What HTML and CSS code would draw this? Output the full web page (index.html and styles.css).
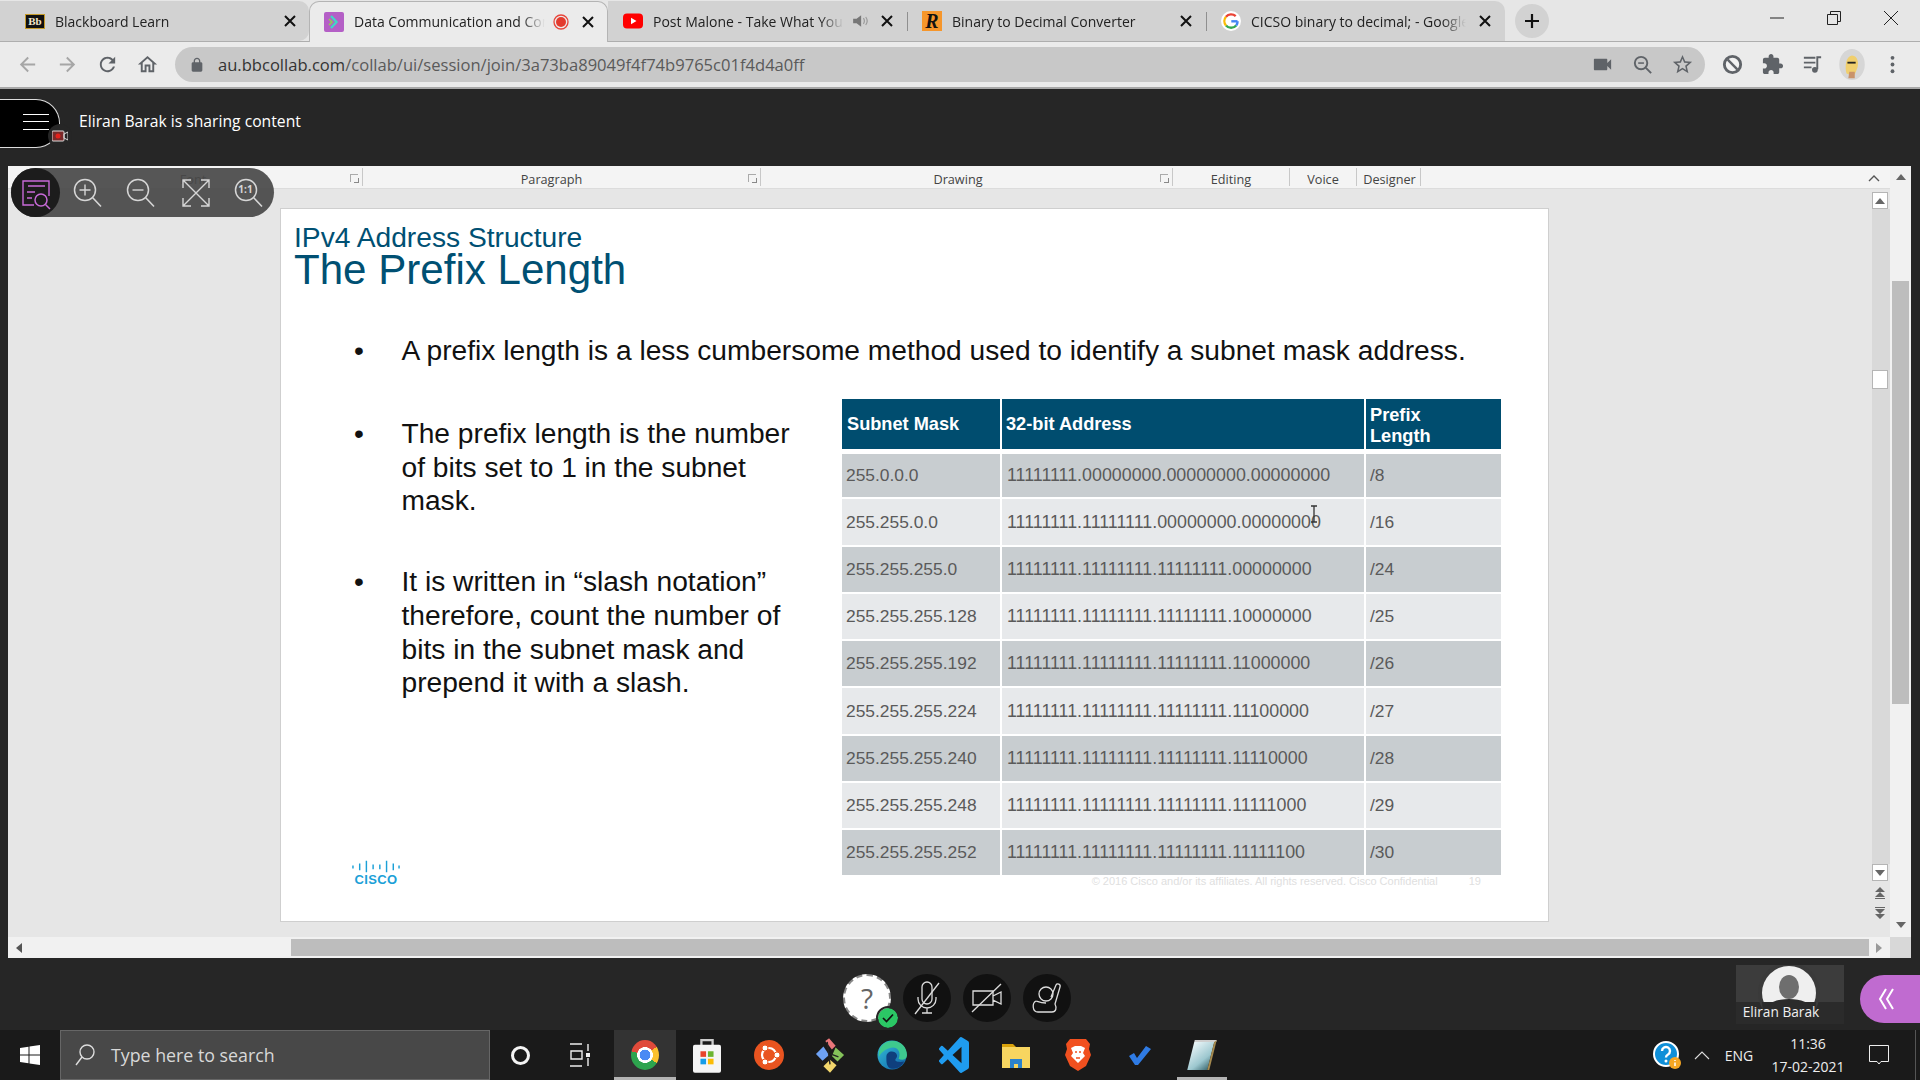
FILE: index.html
```html
<!DOCTYPE html>
<html lang="en">
<head>
<meta charset="utf-8">
<title>Data Communication and Computer Networks</title>
<link rel="stylesheet" href="styles.css">
</head>
<body>
<svg class="sprite" aria-hidden="true">
  <symbol id="close" viewBox="0 0 14 14"><path d="M2 2l10 10M12 2L2 12" fill="none" stroke="#111" stroke-width="2"/></symbol>
  <symbol id="tmag" viewBox="0 0 40 40"><circle cx="18" cy="17" r="10.5" fill="none" stroke="#d6d6d6" stroke-width="1.5"/><path d="M25.5 24.5L34 33.5" stroke="#d6d6d6" stroke-width="1.6"/></symbol>
  <symbol id="uptri" viewBox="0 0 10 6"><path d="M5 0l5 6H0z" fill="#666"/></symbol>
  <symbol id="dntri" viewBox="0 0 10 6"><path d="M0 0h10L5 6z" fill="#666"/></symbol>
</svg>

<header class="tabstrip">
  <div class="tab tab-first">
    <span class="fav fav-bb">Bb</span>
    <span class="tab-title">Blackboard Learn</span>
    <svg class="tab-close"><use href="#close"/></svg>
  </div>
  <div class="tab tab-active">
    <svg class="fav" viewBox="0 0 20 20"><rect width="20" height="20" rx="2" fill="#b45fc6"/><path d="M7 4l5.5 6L7 16" fill="none" stroke="#43d6c4" stroke-width="2.4"/><path d="M5 7l3 3-3 3" fill="none" stroke="#8fd14f" stroke-width="1.6"/></svg>
    <span class="tab-title">Data Communication and Computer</span>
    <svg class="tab-rec" viewBox="0 0 16 16"><circle cx="8" cy="8" r="7" fill="none" stroke="#e8453a" stroke-width="1.3"/><circle cx="8" cy="8" r="5" fill="#e33b2e"/></svg>
    <svg class="tab-close"><use href="#close"/></svg>
  </div>
  <div class="tab">
    <svg class="fav" viewBox="0 0 20 20"><rect y="2.5" width="20" height="15" rx="4" fill="#f00"/><path d="M8 6.8l5.5 3.2L8 13.200z" fill="#fff"/></svg>
    <span class="tab-title">Post Malone - Take What You Want</span>
    <svg class="tab-rec" viewBox="0 0 14 14"><path d="M1 5h3l4-3v10L4 9H1z" fill="#777"/><path d="M10 4.500c1 1.500 1 3.500 0 5M12 3.500c1.500 2 1.500 5 0 7" fill="none" stroke="#999"/></svg>
    <svg class="tab-close"><use href="#close"/></svg>
  </div>
  <div class="tab tab-sep">
    <span class="fav fav-r">R</span>
    <span class="tab-title">Binary to Decimal Converter</span>
    <svg class="tab-close"><use href="#close"/></svg>
  </div>
  <div class="tab tab-sep tab-google">
    <svg class="fav" viewBox="0 0 20 20"><circle cx="10" cy="10" r="10" fill="#fff"/><path d="M16.500 10.300H10.300" fill="none" stroke="#4285f4" stroke-width="2.400"/><path d="M15.200 14.500A6.800 6.800 0 0 1 5 14.500" fill="none" stroke="#34a853" stroke-width="2.400"/><path d="M5 14.500A6.800 6.800 0 0 1 5 5.700" fill="none" stroke="#fbbc05" stroke-width="2.400"/><path d="M5 5.700A6.800 6.800 0 0 1 14.700 5.200" fill="none" stroke="#ea4335" stroke-width="2.400"/><path d="M16.600 10.300A6.800 6.800 0 0 1 15.200 14.500" fill="none" stroke="#4285f4" stroke-width="2.400"/></svg>
    <span class="tab-title">CICSO binary to decimal; - Google Search</span>
    <svg class="tab-close"><use href="#close"/></svg>
  </div>
  <div class="newtab"><svg viewBox="0 0 16 16" width="16" height="16"><path d="M8 1v14M1 8h14" stroke="#111" stroke-width="2.200"/></svg></div>
  <div class="winctl">
    <svg viewBox="0 0 14 14" width="14" height="14"><path d="M0 7h14" stroke="#222" stroke-width="1"/></svg>
    <svg viewBox="0 0 14 14" width="14" height="14"><path d="M.5 3.500h10v10H.5zM3.500 3.500V.5h10v10h-3" fill="none" stroke="#222"/></svg>
    <svg viewBox="0 0 14 14" width="14" height="14"><path d="M0 0l14 14M14 0L0 14" stroke="#222"/></svg>
  </div>
</header>

<nav class="toolbar">
  <span class="tbtn"><svg viewBox="0 0 24 24"><path fill="#a6a6a6" d="M20 11H7.830l5.590-5.590L12 4l-8 8 8 8 1.410-1.410L7.830 13H20v-2z"/></svg></span>
  <span class="tbtn"><svg viewBox="0 0 24 24"><path fill="#a6a6a6" d="M12 4l-1.410 1.410L16.170 11H4v2h12.170l-5.580 5.590L12 20l8-8z"/></svg></span>
  <span class="tbtn"><svg viewBox="0 0 24 24"><path fill="#5f6368" d="M17.650 6.350C16.200 4.900 14.210 4 12 4c-4.420 0-7.990 3.580-7.990 8s3.570 8 7.990 8c3.730 0 6.840-2.550 7.730-6h-2.080c-.82 2.330-3.040 4-5.650 4-3.310 0-6-2.690-6-6s2.690-6 6-6c1.660 0 3.140.69 4.220 1.780L13 11h7V4l-2.350 2.350z"/></svg></span>
  <span class="tbtn"><svg viewBox="0 0 24 24"><path fill="#5f6368" d="M12 5.690l5 4.500V18h-2v-6H9v6H7v-7.810l5-4.500M12 3L2 12h3v8h6v-6h2v6h6v-8h3L12 3z"/></svg></span>
  <div class="omnibox">
    <svg class="lock" viewBox="0 0 24 24"><path fill="#5f6368" d="M18 8h-1V6c0-2.760-2.240-5-5-5S7 3.240 7 6v2H6c-1.100 0-2 .9-2 2v10c0 1.100.9 2 2 2h12c1.100 0 2-.9 2-2V10c0-1.100-.9-2-2-2zM9 6c0-1.660 1.340-3 3-3s3 1.340 3 3v2H9V6z"/></svg>
    <span class="url"><b>au.bbcollab.com</b>/collab/ui/session/join/3a73ba89049f4f74b9765c01f4d4a0ff</span>
    <span class="tbtn"><svg viewBox="0 0 24 24"><path fill="#5f6368" d="M17 10.500V7c0-.55-.45-1-1-1H4c-.55 0-1 .45-1 1v10c0 .55.45 1 1 1h12c.55 0 1-.45 1-1v-3.500l4 4v-11l-4 4z"/></svg></span>
    <span class="tbtn"><svg viewBox="0 0 24 24"><circle cx="10.500" cy="10.500" r="6.500" fill="none" stroke="#5f6368" stroke-width="2"/><path d="M15.500 15.500L21 21" stroke="#5f6368" stroke-width="2"/><path d="M7.500 10.500h6" stroke="#5f6368" stroke-width="1.600"/></svg></span>
    <span class="tbtn"><svg viewBox="0 0 24 24"><path fill="#5f6368" d="M22 9.240l-7.190-.62L12 2 9.190 8.630 2 9.240l5.460 4.730L5.820 21 12 17.270 18.180 21l-1.630-7.030L22 9.240zM12 15.400l-3.760 2.270 1-4.280-3.320-2.880 4.380-.38L12 6.100l1.710 4.040 4.380.38-3.320 2.880 1 4.280L12 15.400z"/></svg></span>
  </div>
  <div class="ext">
    <span class="tbtn"><svg viewBox="0 0 24 24"><circle cx="12" cy="12" r="8.500" fill="#f2f2f2" stroke="#5f6368" stroke-width="3"/><path d="M7 7l10 10" stroke="#5f6368" stroke-width="2.500"/></svg></span>
    <span class="tbtn"><svg viewBox="0 0 24 24"><path fill="#5f6368" d="M20.500 11H19V7c0-1.100-.9-2-2-2h-4V3.500C13 2.120 11.880 1 10.500 1S8 2.120 8 3.500V5H4c-1.100 0-1.990.9-1.990 2v3.800H3.500c1.490 0 2.700 1.210 2.700 2.700s-1.210 2.700-2.700 2.700H2V20c0 1.100.9 2 2 2h3.800v-1.500c0-1.490 1.210-2.700 2.700-2.700 1.490 0 2.700 1.210 2.700 2.700V22H17c1.100 0 2-.9 2-2v-4h1.500c1.380 0 2.500-1.120 2.500-2.500S21.880 11 20.500 11z"/></svg></span>
    <span class="tbtn"><svg viewBox="0 0 24 24"><path d="M3 5h12M3 10h12M3 15h8" stroke="#5f6368" stroke-width="2"/><path d="M17 17V4.500h4" fill="none" stroke="#5f6368" stroke-width="2"/><circle cx="14.500" cy="17.500" r="3" fill="#5f6368"/></svg></span>
    <span class="tbtn"><svg viewBox="0 0 28 34" class="avatar"><ellipse cx="14" cy="17" rx="14" ry="17" fill="#d6d6d6"/><path d="M8 27c-2-8-1-19 6-20 7 0 8 10 5 16l-2 5h-6z" fill="#f0cf6e"/><path d="M9 15h9" stroke="#222" stroke-width="2"/><path d="M11 25h6v7h-7z" fill="#c9936b"/></svg></span>
    <span class="tbtn"><svg viewBox="0 0 24 24"><circle cx="12" cy="5" r="2" fill="#5f6368"/><circle cx="12" cy="12" r="2" fill="#5f6368"/><circle cx="12" cy="19" r="2" fill="#5f6368"/></svg></span>
  </div>
</nav>

<section class="sessionbar">
  <div class="menu-pill">
    <span class="burger"></span>
    <span class="cam-badge"><svg viewBox="0 0 16 12" width="16" height="12"><rect x="0" y="1" width="12" height="10" rx="1" fill="#7a2a2a" stroke="#ddd"/><circle cx="6" cy="6" r="2.500" fill="#e3211c"/><path d="M12 4l4-2v8l-4-2z" fill="none" stroke="#ddd"/></svg></span>
  </div>
  <span class="session-text">Eliran Barak is sharing content</span>
</section>

<main class="viewer">
  <div class="viewer-body">
    <div class="doc">
      <div class="ribbon">
        <span class="rb rb-clip"></span>
        <span class="rb rb-font">Font<i class="launch"></i></span>
        <span class="rb rb-para">Paragraph<i class="launch"></i></span>
        <span class="rb rb-draw">Drawing<i class="launch"></i></span>
        <span class="rb rb-edit">Editing</span>
        <span class="rb rb-voice">Voice</span>
        <span class="rb rb-design">Designer</span>
        <svg class="rb-collapse" viewBox="0 0 12 7" width="12" height="7"><path d="M1 6l5-5 5 5" fill="none" stroke="#555" stroke-width="1.400"/></svg>
      </div>
      <div class="stage">
        <div class="canvas">
          <article class="slide">
            <p class="kicker">IPv4 Address Structure</p>
            <h1 class="headline">The Prefix Length</h1>
            <div class="point point-wide"><span class="dot">•</span><span>A prefix length is a less cumbersome method used to identify a subnet mask address.</span></div>
            <div class="columns">
              <div class="col-text">
                <div class="point"><span class="dot">•</span><span>The prefix length is the number<br>of bits set to 1 in the subnet<br>mask.</span></div>
                <div class="point point-next"><span class="dot">•</span><span>It is written in “slash notation”<br>therefore, count the number of<br>bits in the subnet mask and<br>prepend it with a slash.</span></div>
                <div class="cisco">
                  <svg viewBox="0 0 50 14" width="48" height="15"><path d="M1 7v3M8 5v7M15 2v12M22 6v5M29 6v5M36 2v12M43 5v7M49 7v3" stroke="#1ba0d7" stroke-width="1.500"/></svg>
                  <span>CISCO</span>
                </div>
              </div>
              <div class="col-table">
                <table class="prefix">
                  <thead><tr><th>Subnet Mask</th><th>32-bit Address</th><th>Prefix<br>Length</th></tr></thead>
                  <tbody>
                    <tr><td>255.0.0.0</td><td>11111111.00000000.00000000.00000000</td><td>/8</td></tr>
                    <tr><td>255.255.0.0</td><td>11111111.11111111.00000000.00000000</td><td>/16</td></tr>
                    <tr><td>255.255.255.0</td><td>11111111.11111111.11111111.00000000</td><td>/24</td></tr>
                    <tr><td>255.255.255.128</td><td>11111111.11111111.11111111.10000000</td><td>/25</td></tr>
                    <tr><td>255.255.255.192</td><td>11111111.11111111.11111111.11000000</td><td>/26</td></tr>
                    <tr><td>255.255.255.224</td><td>11111111.11111111.11111111.11100000</td><td>/27</td></tr>
                    <tr><td>255.255.255.240</td><td>11111111.11111111.11111111.11110000</td><td>/28</td></tr>
                    <tr><td>255.255.255.248</td><td>11111111.11111111.11111111.11111000</td><td>/29</td></tr>
                    <tr><td>255.255.255.252</td><td>11111111.11111111.11111111.11111100</td><td>/30</td></tr>
                  </tbody>
                </table>
                <p class="legal">© 2016 Cisco and/or its affiliates. All rights reserved. Cisco Confidential <span class="pageno">19</span></p>
                <svg class="ibeam" viewBox="0 0 8 18" width="8" height="18"><path d="M1 1h6M4 1v16M1 17h6" stroke="#333" stroke-width="1.300" fill="none"/></svg>
              </div>
            </div>
          </article>
        </div>
        <div class="inner-scroll">
          <span class="isb"><svg width="10" height="6"><use href="#uptri"/></svg></span>
          <div class="itrack"><span class="ithumb"></span></div>
          <span class="isb"><svg width="10" height="6"><use href="#dntri"/></svg></span>
          <svg class="dbl" viewBox="0 0 10 12" width="10" height="12"><path d="M5 0l5 5H0zM5 5l5 5H0zM0 11h10v1H0z" fill="#666"/></svg>
          <svg class="dbl dbl2" viewBox="0 0 10 12" width="10" height="12"><path d="M0 0h10v1H0zM0 2h10L5 7zM0 7h10l-5 5z" fill="#666"/></svg>
        </div>
      </div>
    </div>
    <div class="outer-v">
      <svg class="ov-up" width="10" height="6"><use href="#uptri"/></svg>
      <span class="ov-thumb"></span>
      <svg class="ov-dn" width="10" height="6"><use href="#dntri"/></svg>
    </div>
  </div>
  <div class="outer-h">
    <svg class="oh-l" viewBox="0 0 6 10" width="6" height="10"><path d="M6 0v10L0 5z" fill="#555"/></svg>
    <span class="oh-thumb"></span>
    <svg class="oh-r" viewBox="0 0 6 10" width="6" height="10"><path d="M0 0v10l6-5z" fill="#999"/></svg>
    <span class="oh-corner"></span>
  </div>

  <div class="zoomtools">
    <span class="zt zt-on"><svg viewBox="0 0 40 40" width="40" height="40"><path d="M18 32H7V8h26v15" fill="none" stroke="#c76ad8" stroke-width="1.400"/><path d="M12 13h17M11 19h8M11 25h5" stroke="#c76ad8" stroke-width="1.400"/><circle cx="25" cy="27" r="6" fill="none" stroke="#c76ad8" stroke-width="1.500"/><path d="M29.500 31.500L34 36" stroke="#c76ad8" stroke-width="1.500"/></svg></span>
    <span class="zt"><svg width="40" height="40"><use href="#tmag"/><path d="M12.500 17h11M18 11.500v11" stroke="#d6d6d6" stroke-width="1.400"/></svg></span>
    <span class="zt"><svg width="40" height="40"><use href="#tmag"/><path d="M12.500 17h11" stroke="#d6d6d6" stroke-width="1.400"/></svg></span>
    <span class="zt zt-fit"><svg viewBox="0 0 40 40" width="40" height="40"><path d="M7 15V7h8M33 15V7h-8M7 25v8h8M33 25v8h-8M7 7l26 26M33 7L7 33" fill="none" stroke="#d6d6d6" stroke-width="1.400"/></svg></span>
    <span class="zt zt-one"><svg width="40" height="40"><use href="#tmag"/></svg><b>1:1</b></span>
  </div>
</main>

<section class="controls">
  <div class="ctl ctl-me">?<span class="ok"><svg viewBox="0 0 12 10" width="12" height="10"><path d="M1 5l3.500 3.500L11 1.500" fill="none" stroke="#111" stroke-width="1.700"/></svg></span></div>
  <div class="ctl"><svg viewBox="0 0 32 36" width="32" height="36"><path d="M11 7a5 5 0 0 1 10 0v12a5 5 0 0 1-10 0zM7 17v2a9 9 0 0 0 18 0v-2M16 28v5M11 33h10" fill="none" stroke="#ddd" stroke-width="1.300"/><path d="M4 34L28 3" stroke="#ddd" stroke-width="1.300"/></svg></div>
  <div class="ctl"><svg viewBox="0 0 32 36" width="34" height="36"><path d="M2 11h20v14H2zM22 16l8-4v12l-8-4z" fill="none" stroke="#ddd" stroke-width="1.300"/><path d="M1 32L30 4" stroke="#ddd" stroke-width="1.300"/></svg></div>
  <div class="ctl"><svg viewBox="0 0 36 36" width="36" height="36"><circle cx="17" cy="14" r="7" fill="none" stroke="#ddd" stroke-width="1.300"/><path d="M7 21c-4 2-4 11 2 11h14c4 0 5-4 3-8l5-17c1-3-3-4-4-2l-5 12M7 21c3 1 5 2 10 2" fill="none" stroke="#ddd" stroke-width="1.300"/></svg></div>
  <div class="tile">
    <span class="tile-top"></span>
    <svg class="tile-av" viewBox="0 0 62 62" width="62" height="62"><circle cx="31" cy="31" r="31" fill="#3a3a3a"/><circle cx="31" cy="31" r="27" fill="#efefef"/><ellipse cx="31" cy="25" rx="10" ry="12" fill="#6e6e6e"/><path d="M4 40h54a27 27 0 0 1-54 0z" fill="#2b2b2b"/><ellipse cx="31" cy="46" rx="22" ry="9" fill="#2b2b2b"/></svg>
    <span class="tile-name">Eliran Barak</span>
  </div>
  <div class="drawer"><svg viewBox="0 0 16 24" width="16" height="24"><path d="M8 2L2 12l6 10M15 2L9 12l6 10" fill="none" stroke="#fff" stroke-width="2"/></svg></div>
</section>

<footer class="taskbar">
  <span class="start"><svg viewBox="0 0 20 20" width="20" height="20"><path fill="#fff" d="M0 3l8.500-1.200v7.700H0zM9.500 1.600L20 0v9.500H9.500zM0 10.500h8.500v7.700L0 17zM9.500 10.500H20V20L9.500 18.400z"/></svg></span>
  <div class="search">
    <svg viewBox="0 0 20 22" width="20" height="22"><circle cx="12" cy="8" r="7" fill="none" stroke="#ddd" stroke-width="1.400"/><path d="M7 13L1 21" stroke="#ddd" stroke-width="1.400"/></svg>
    <span>Type here to search</span>
  </div>
  <span class="tk"><span class="cortana"></span></span>
  <span class="tk tk-view"><svg viewBox="0 0 20 24" width="20" height="24"><path d="M0 1h12M0 23h12M1 8h11v8H1zM18 1v7M18 15v8" fill="none" stroke="#eee" stroke-width="1.400"/><rect x="16" y="10" width="4" height="4" fill="#eee"/></svg></span>
  <span class="tk tk-active"><span class="chrome"></span></span>
  <span class="tk"><svg viewBox="0 0 30 38" width="28" height="36"><path d="M9 9V3h12v6" fill="none" stroke="#ccc" stroke-width="2.500"/><rect y="8" width="30" height="30" rx="2" fill="#f5f5f5"/><rect x="8" y="15" width="6" height="6" fill="#e8452c"/><rect x="16" y="15" width="6" height="6" fill="#6cb530"/><rect x="8" y="23" width="6" height="6" fill="#159de8"/><rect x="16" y="23" width="6" height="6" fill="#fbbc05"/></svg></span>
  <span class="tk"><svg viewBox="0 0 30 30" width="30" height="32"><circle cx="15" cy="15" r="15" fill="#e95420"/><circle cx="15" cy="15" r="7" fill="none" stroke="#fff" stroke-width="2.200"/><circle cx="23" cy="15" r="3" fill="#fff" stroke="#e95420"/><circle cx="11" cy="8" r="3" fill="#fff" stroke="#e95420"/><circle cx="11" cy="22" r="3" fill="#fff" stroke="#e95420"/></svg></span>
  <span class="tk"><svg viewBox="0 0 32 38" width="30" height="36"><path d="M11 4l4-3 7 8-4 4z" fill="#e9777a"/><path d="M9 10l6 9-7 6-7-7z" fill="#6ea2f5"/><path d="M22 11l9 8-7 7-6-6z" fill="#84c25a"/><path d="M16 24l7 6-7 8-7-7z" fill="#f2d66c"/><path d="M13 5l3 24M17 18l8 3" stroke="#222" stroke-width="1.500"/></svg></span>
  <span class="tk"><svg viewBox="0 0 32 36" width="30" height="34"><defs><linearGradient id="eg" x1="0" y1="0" x2="1" y2="1"><stop offset="0" stop-color="#35c1d8"/><stop offset="1" stop-color="#0d5fa8"/></linearGradient></defs><circle cx="16" cy="18" r="15.500" fill="url(#eg)"/><path d="M17 3c9 0 15 7 15 15 0 5-5 6-9 4 3-7-1-12-6-12S5 14 2 20C1 9 8 3 17 3z" fill="#3ec98e"/><path d="M10 20c0-5 5-7 9-5 3 2 3 5 1 7-2 3 3 4 9 3-3 6-9 9-15 7-4-2-4-7-4-12z" fill="#0f3f7d"/></svg></span>
  <span class="tk"><svg viewBox="0 0 24 24" width="30" height="36" preserveAspectRatio="none"><path fill="#1f9cf0" d="M23.150 2.587 18.210.21a1.494 1.494 0 0 0-1.705.29l-9.460 8.630-4.120-3.128a.999.999 0 0 0-1.276.057L.327 7.261A1 1 0 0 0 .326 8.740L3.899 12 .326 15.260a1 1 0 0 0 .001 1.479L1.650 17.940a.999.999 0 0 0 1.276.057l4.120-3.128 9.460 8.630a1.492 1.492 0 0 0 1.704.29l4.942-2.377A1.500 1.500 0 0 0 24 20.060V3.939a1.500 1.500 0 0 0-.85-1.352zm-5.146 14.861L10.826 12l7.178-5.448v10.896z"/></svg></span>
  <span class="tk"><svg viewBox="0 0 28 28" width="28" height="28"><path d="M0 3h11l3 3H0z" fill="#d9a20b"/><path d="M0 6h28v21H0z" fill="#f7d560"/><path d="M8 27v-9h12v9h-4v-4h-4v4z" fill="#2b82cc"/></svg></span>
  <span class="tk"><svg viewBox="0 0 26 34" width="26" height="34"><path d="M5 1h16l4 5-1 5 2 6-5 11-8 5-8-5L0 17l2-6-1-5z" fill="#f1501f"/><path d="M6 10l4-2h6l4 2-2 5 2 3-7 7-7-7 2-3z" fill="#fff"/><path d="M10 14h2M14 14h2M11 20h4" stroke="#f1501f" stroke-width="1.500"/></svg></span>
  <span class="tk"><svg viewBox="0 0 24 20" width="24" height="20"><path d="M1 11l5-3 3 5L18 1l5 3L10 20h-3z" fill="#2f7be4"/></svg></span>
  <span class="tk tk-note"><span class="notepad"></span></span>
  <div class="tray">
    <span class="tr tr-help"><svg viewBox="0 0 30 30" width="30" height="30"><circle cx="14" cy="14" r="12" fill="#0f8fd8" stroke="#fff" stroke-width="2"/><path d="M10 11a4 4 0 1 1 6 3.500c-1.500.8-2 1.500-2 3" fill="none" stroke="#fff" stroke-width="2.400"/><circle cx="14" cy="21" r="1.500" fill="#fff"/><circle cx="23" cy="23" r="6" fill="#f6a623"/><path d="M23 20v1M23 22.500v3.500" stroke="#fff" stroke-width="1.500"/></svg></span>
    <span class="tr tr-chev"><svg viewBox="0 0 16 9" width="16" height="9"><path d="M1 8l7-7 7 7" fill="none" stroke="#ddd" stroke-width="1.100"/></svg></span>
    <span class="tr tr-eng">ENG</span>
    <span class="tr tr-clock"><span>11:36</span><span>17-02-2021</span></span>
    <span class="tr tr-note"><svg viewBox="0 0 20 20" width="20" height="20"><path d="M.5.5h19v16H12l-2 2.500L8 16.500H.5z" fill="none" stroke="#eee"/></svg></span>
    <span class="tr tr-peek"></span>
  </div>
</footer>
</body>
</html>
```
FILE: styles.css
```css
* { box-sizing: border-box; }
html, body { margin: 0; padding: 0; }
body {
  width: 1920px; height: 1080px; overflow: hidden;
  display: flex; flex-direction: column;
  background: #262626;
  font-family: "Open Sans", "Liberation Sans", sans-serif;
}
.sprite { display: none; }

/* tab strip */
.tabstrip {
  height: 42px; flex: none; display: flex; align-items: stretch;
  background: #e6e6e6; border-bottom: 1px solid #aeaeae;
  padding-top: 1px;
}
.tab {
  width: 299px; flex: none; display: flex; align-items: center;
  padding: 0 13px 0 15px; background: #d2d2d2; position: relative;
  font-size: 14px; color: #222;
}
.tab-first { width: 309px; padding: 0 12px 0 25px; border-radius: 0 10px 10px 0; }
.tab-active {
  background: #ebebeb; border: 1px solid #b4b4b4; border-bottom: 0; border-radius: 10px 10px 0 0;
  height: 41px; padding: 0 12px 1px 14px;
}
.tab-sep::before { content: ""; position: absolute; left: 0; top: 11px; width: 1px; height: 19px; background: #8f8f8f; }
.tab-google { border-radius: 0 10px 0 0; }
.tab-google .tab-title { margin-right: 12px; }
.fav { width: 20px; height: 20px; flex: none; margin-right: 10px; display: block; }
.fav-bb {
  width: 20px; height: 15px; background: #111; border: 1px solid #c49a2a; color: #f3e6c8;
  font: bold 11px/13px "Liberation Serif", serif; text-align: center;
}
.fav-r {
  background: #f6962b; color: #111;
  font: italic bold 20px/20px "Liberation Serif", serif; text-align: center;
}
.tab-title {
  flex: 1; min-width: 0; white-space: nowrap; overflow: hidden;
  -webkit-mask-image: linear-gradient(to right, #000 calc(100% - 24px), transparent);
  mask-image: linear-gradient(to right, #000 calc(100% - 24px), transparent);
}
.tab-rec { width: 16px; height: 16px; flex: none; margin-left: 8px; margin-right: 12px; }
.tab-close { width: 14px; height: 14px; flex: none; }
.newtab {
  width: 34px; height: 34px; margin: 3px 0 0 10px; border-radius: 50%;
  background: #d2d2d2; display: flex; align-items: center; justify-content: center;
}
.winctl { margin-left: auto; display: flex; align-items: center; gap: 43px; padding: 0 22px 6px 0; }

/* toolbar */
.toolbar {
  height: 47px; flex: none; display: flex; align-items: center;
  background: #ebebeb; border-bottom: 2px solid #a8a8a8;
  padding-left: 7px;
}
.tbtn { width: 40px; height: 36px; flex: none; display: flex; align-items: center; justify-content: center; }
.tbtn svg { width: 23px; height: 23px; }
.tbtn .avatar { width: 26px; height: 31px; }
.omnibox {
  width: 1530px; height: 35px; margin-left: 8px; padding: 0 3px 0 14px;
  display: flex; align-items: center; background: #c8c8c8; border-radius: 18px;
}
.lock { width: 16px; height: 16px; flex: none; margin-right: 13px; }
.url { flex: 1; font-size: 16.570px; color: #5a5a5a; white-space: nowrap; }
.url b { font-weight: 400; color: #333; }
.ext { display: flex; margin-left: 7px; }

/* session bar */
.sessionbar {
  height: 77px; flex: none; display: flex; align-items: flex-start;
  padding-top: 10px; background: #262626;
}
.menu-pill {
  width: 60px; height: 49px; background: #000; position: relative;
  border: 1px solid #ddd; border-left: 0; border-radius: 0 24px 24px 0;
  display: flex; align-items: center; padding-left: 23px;
}
.burger { width: 26px; height: 16px; border-top: 1px solid #fff; border-bottom: 1px solid #fff; position: relative; margin-bottom: 3px; }
.burger::before { content: ""; position: absolute; left: 0; right: 0; top: 6px; height: 1px; background: #fff; }
.cam-badge {
  position: absolute; right: -13px; bottom: -1px; width: 24px; height: 24px; border-radius: 50%;
  background: #262626; display: flex; align-items: center; justify-content: center;
}
.session-text { margin: 11px 0 0 19px; font-size: 15.700px; line-height: 22px; color: #fff; }

/* viewer */
.viewer {
  height: 792px; flex: none; margin: 0 9px 0 8px; display: flex; flex-direction: column;
  position: relative; background: #f1f1f1;
}
.viewer-body { height: 771px; flex: none; display: flex; }
.doc { flex: 1; min-width: 0; display: flex; flex-direction: column; }
.ribbon {
  height: 23px; flex: none; display: flex; background: #f4f4f4;
  border-bottom: 1px solid #dcdcdc; position: relative;
  font-size: 12.700px; color: #444;
}
.rb { position: relative; text-align: center; border-right: 1px solid #c8c8c8; height: 18px; line-height: 22px; margin-top: 2px; flex: none; }
.rb-clip { width: 34px; }
.rb-font { width: 321px; padding-right: 18px; }
.rb-para { width: 398px; padding-right: 20px; }
.rb-draw { width: 412px; padding-right: 17px; }
.rb-edit { width: 117px; }
.rb-voice { width: 67px; }
.rb-design { width: 64px; padding-left: 2px; }
.launch { position: absolute; right: 4px; top: 6px; width: 8px; height: 8px; border: 1px solid #aaa; border-width: 1px 0 0 1px; }
.launch::after { content: ""; position: absolute; right: -1px; bottom: -1px; width: 4px; height: 4px; border: 1px solid #888; border-width: 0 1px 1px 0; }
.rb-collapse { margin: 9px 10px 0 auto; }
.stage { flex: 1; min-height: 0; display: flex; background: #e6e6e6; }
.canvas { flex: 1; min-width: 0; padding: 19px 0 0 272px; }

/* slide */
.slide {
  width: 1269px; height: 714px; background: #fff; border: 1px solid #cfcfcf;
  padding: 13px 0 0 13px;
  font-family: "Liberation Sans", Arial, sans-serif; color: #111;
}
.kicker { margin: 0; font-size: 28.200px; line-height: 30px; color: #005073; }
.headline { margin: 0; font-size: 42.100px; line-height: 36px; font-weight: 400; color: #005073; }
.point { display: flex; font-size: 28.160px; line-height: 33.700px; white-space: nowrap; }
.dot { width: 47.500px; margin-left: 60px; flex: none; }
.point-wide { margin-top: 46px; line-height: 34px; }
.point-next { margin-top: 47px; }
.columns { display: flex; margin-top: 31px; }
.col-text { width: 548px; flex: none; padding-top: 18px; }
.cisco {
  margin: 158px 0 0 57px; width: 50px; display: flex; flex-direction: column; align-items: center;
  color: #1ba0d7; font-size: 13px; line-height: 14px; font-weight: 700; letter-spacing: .4px;
}
.col-table { width: 659px; flex: none; position: relative; }
.prefix { width: 659px; border-collapse: separate; border-spacing: 0; table-layout: fixed; }
.prefix th:nth-child(1), .prefix td:nth-child(1) { width: 160px; }
.prefix th:nth-child(2), .prefix td:nth-child(2) { width: 364px; }
.prefix th {
  height: 50px; padding: 1px 0 0 5px; background: #004d6f; color: #fff; text-align: left;
  font-size: 18.200px; line-height: 21px; border-right: 2px solid #fff; font-weight: 700;
}
.prefix th:nth-child(2) { padding-left: 4px; }
.prefix th:last-child { padding-top: 4px; padding-left: 4px; }
.prefix th:last-child, .prefix td:last-child { border-right: 0; }
.prefix tbody::before { content: ""; display: block; height: 5px; }
.prefix td {
  height: 47px; padding: 0 0 0 4px; font-size: 17.400px; color: #5a5a5a; white-space: nowrap;
  border-right: 2px solid #fff; border-bottom: 2px solid #fff; background: #e7e9eb;
}
.prefix tr:nth-child(odd) td { background: #c8cdd0; }
.prefix tbody tr:first-child td { height: 45px; }
.prefix tbody tr:nth-child(2) td, .prefix tbody tr:nth-child(6) td { height: 48px; }
.prefix td:nth-child(2) { padding-left: 5px; font-size: 17.850px; }
.legal { margin: -1px 0 0; padding-right: 20px; font-size: 11px; line-height: 11px; color: #e0e0e0; text-align: right; white-space: nowrap; }
.pageno { margin-left: 28px; }
.ibeam { position: absolute; left: 468px; top: 106px; }

/* inner scrollbar */
.inner-scroll { width: 18px; flex: none; display: flex; flex-direction: column; align-items: flex-start; padding-top: 3px; }
.isb { width: 16px; height: 17px; flex: none; background: #fff; border: 1px solid #b5b5b5; display: flex; align-items: center; justify-content: center; }
.itrack { width: 18px; height: 655px; flex: none; background: #d9d9d9; }
.ithumb { display: block; width: 16px; height: 19px; margin-top: 161px; background: #fff; border: 1px solid #b5b5b5; }
.dbl { margin: 6px 0 0 3px; flex: none; }
.dbl2 { margin-top: 8px; }

/* outer scrollbars */
.outer-v { width: 21px; flex: none; background: #f1f1f1; display: flex; flex-direction: column; align-items: center; padding-top: 8px; }
.ov-up { flex: none; }
.ov-thumb { width: 17px; height: 423px; margin-top: 101px; flex: none; background: #bdbdbd; }
.ov-dn { margin-top: 218px; flex: none; }
.outer-h { height: 21px; flex: none; display: flex; align-items: center; background: #f1f1f1; }
.oh-l { margin-left: 8px; flex: none; }
.oh-thumb { width: 1578px; height: 17px; margin-left: 269px; background: #bdbdbd; flex: none; }
.oh-r { margin-left: 7px; flex: none; }
.oh-corner { width: 21px; height: 21px; margin-left: 8px; background: #d8d8d8; flex: none; }

/* floating zoom tools */
.zoomtools {
  position: absolute; left: 3px; top: 2px; width: 263px; height: 49px;
  display: flex; align-items: center; border-radius: 25px;
  background: rgba(72, 72, 72, .92);
}
.zt { width: 53px; height: 49px; flex: none; display: flex; align-items: center; justify-content: center; position: relative; }
.zt-on { width: 49px; background: #1c1c1c; border-radius: 50%; }
.zt-fit { margin-left: 3px; }
.zt-one { margin-left: -1px; }
.zt-one b { position: absolute; left: 12px; top: 14px; width: 25px; text-align: center; font-size: 10px; line-height: 14px; color: #d6d6d6; }

/* meeting controls */
.controls {
  height: 72px; flex: none; display: flex; align-items: flex-start; padding-left: 843px;
  background: #262626;
}
.ctl {
  width: 48px; height: 48px; margin: 16px 12px 0 0; border-radius: 50%; background: #111; flex: none;
  display: flex; align-items: center; justify-content: center; position: relative;
}
.ctl-me { background: #fff; border: 2px dashed #888; color: #666; font-size: 28px; font-weight: 400; }
.ok {
  position: absolute; right: -9px; bottom: -8px; width: 20px; height: 20px; border-radius: 50%;
  background: #2bc765; outline: 2px solid #262626; display: flex; align-items: center; justify-content: center;
}
.tile {
  width: 108px; height: 59px; margin: 7px 16px 0 auto; flex: none; position: relative;
  background: #2b2b2b; overflow: hidden;
}
.tile-top { display: block; height: 37px; background: #3c3c3c; }
.tile-av { position: absolute; left: 22px; top: -3px; }
.tile-name { position: absolute; left: 0; right: 18px; bottom: 3px; text-align: center; font-size: 13.700px; line-height: 18px; color: #f0f0f0; white-space: nowrap; }
.drawer {
  width: 60px; height: 48px; margin-top: 17px; flex: none; background: #c06bd0; border-radius: 24px 0 0 24px;
  display: flex; align-items: center; padding-left: 18px;
}

/* taskbar */
.taskbar { height: 50px; flex: none; display: flex; align-items: stretch; background: #1a1a1a; }
.start { width: 60px; flex: none; display: flex; align-items: center; justify-content: center; }
.search {
  width: 430px; flex: none; display: flex; align-items: center; padding-left: 14px; gap: 16px;
  background: #484848; border: 1px solid #666; color: #d8d8d8; font-size: 17.800px;
}
.tk { width: 61.900px; flex: none; display: flex; align-items: center; justify-content: center; position: relative; }
.tk-view svg { margin-right: 6px; }
.tk-active { background: #333; }
.tk-active::after, .tk-note::after { content: ""; position: absolute; left: 0; right: 0; bottom: 0; height: 3px; background: #b4b4b4; }
.tk-note::after { left: 6px; right: 6px; }
.cortana { width: 19px; height: 19px; border-radius: 50%; border: 3px solid #f4f4f4; }
.chrome {
  width: 28px; height: 30px; border-radius: 50%;
  background:
    radial-gradient(circle, #4a8af4 0 26%, #fff 27% 38%, transparent 39%),
    conic-gradient(from 285deg, #e04a3a 0 130deg, #fbc02d 130deg 200deg, #2da44e 200deg 360deg);
}
.notepad {
  width: 22px; height: 30px; transform: skewX(-14deg);
  background: linear-gradient(135deg, #eef8fa, #9cc7cf 65%, #3e6b73);
  border-right: 2px solid #a58a4f; border-top: 2px solid #cfcfcf;
}
.tray { margin-left: auto; display: flex; align-items: stretch; color: #eee; font-size: 14px; }
.tr { flex: none; display: flex; align-items: center; justify-content: center; }
.tr-help { width: 34px; }
.tr-chev { width: 36px; }
.tr-eng { width: 38px; font-size: 14px; }
.tr-clock { width: 100px; flex-direction: column; font-size: 14px; line-height: 23px; }
.tr-note { width: 42px; }
.tr-peek { width: 20px; justify-content: flex-start; }
.tr-peek::before { content: ""; width: 1px; height: 50px; margin-left: 15px; background: #555; }
```
